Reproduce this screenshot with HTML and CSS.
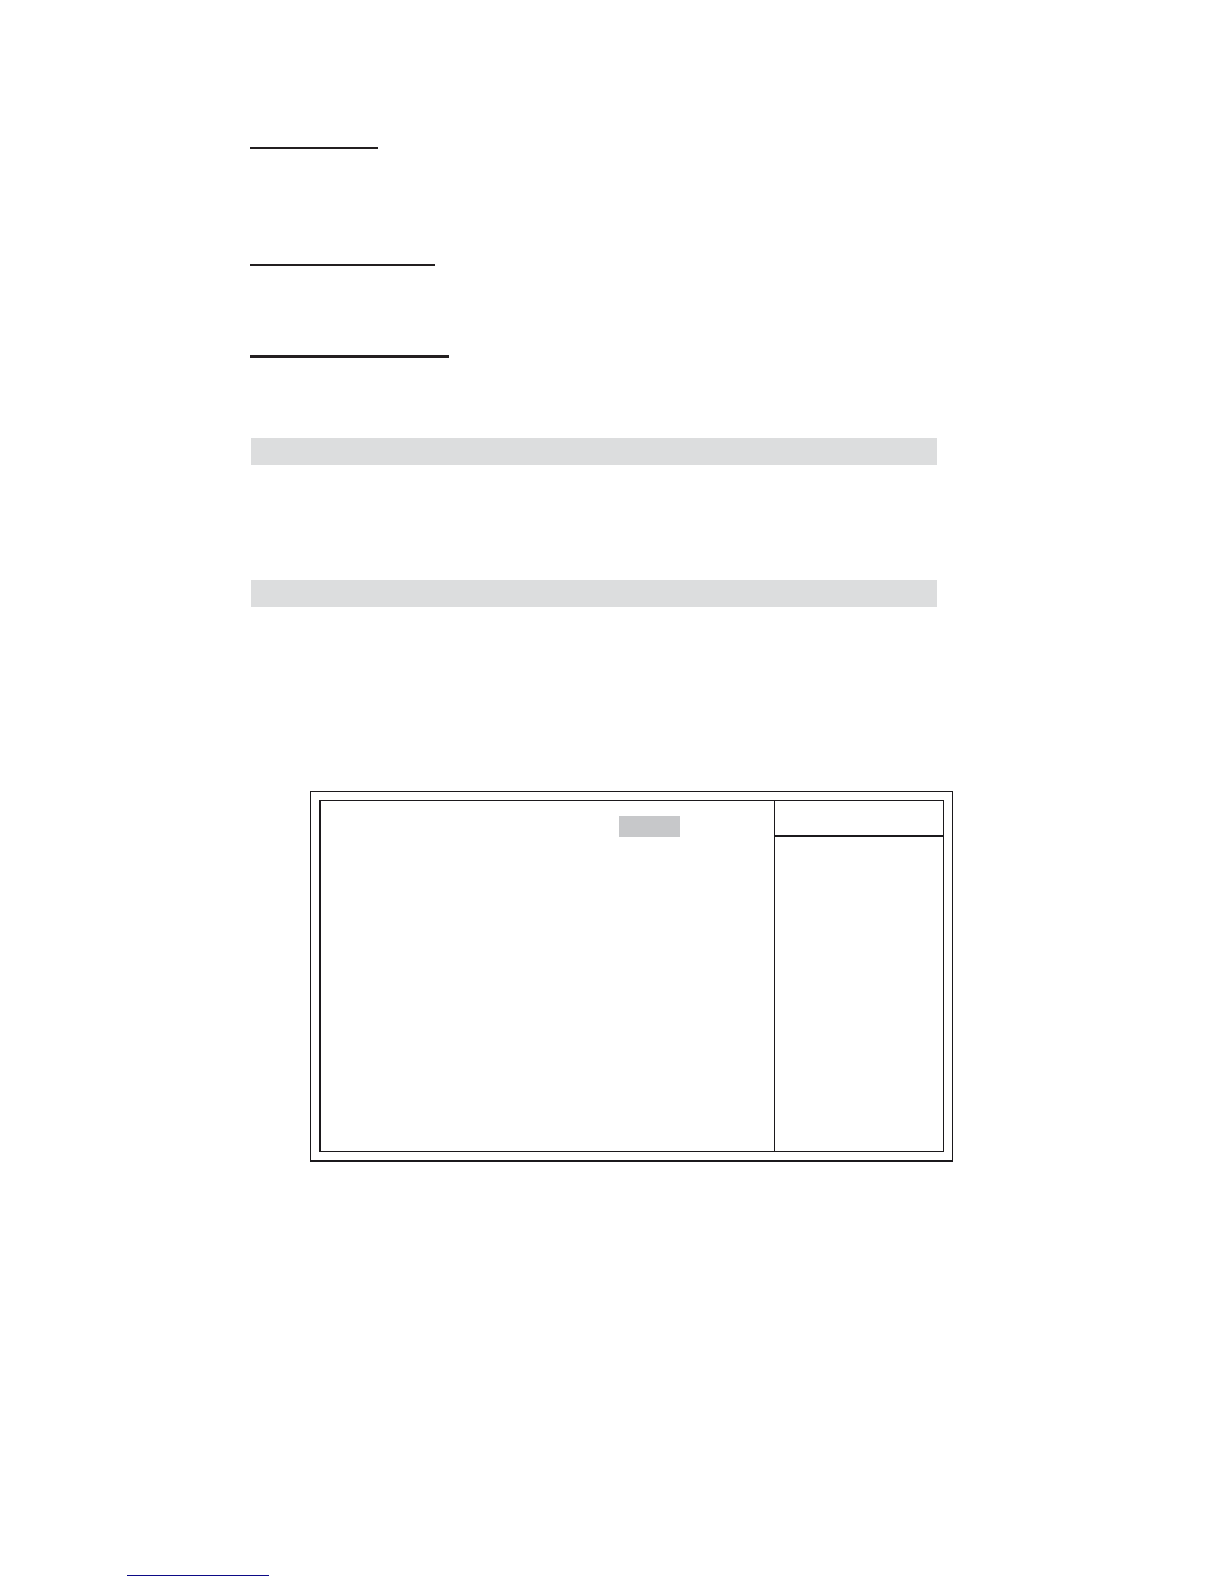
FILE: index.html
```html
<!DOCTYPE html>
<html lang="en">
<head>
<meta charset="utf-8">
<meta name="viewport" content="width=device-width, initial-scale=1">
<title>Document page</title>
<link rel="stylesheet" href="styles.css">
</head>
<body>
<main class="page">
  <hr class="rule rule-short">
  <hr class="rule rule-medium">
  <hr class="rule rule-heavy">
  <div class="band"></div>
  <div class="band"></div>
  <section class="frame">
    <div class="screen">
      <div class="settings"><div class="selected"></div></div>
      <aside class="help"><div class="help-head"></div></aside>
    </div>
  </section>
</main>
<footer class="footer"><hr class="footer-rule"></footer>
</body>
</html>
```
FILE: styles.css
```css
* { box-sizing: border-box; }

body {
  margin: 0;
  background: #ffffff;
  font-family: "Liberation Sans", sans-serif;
}

.page { padding: 147px 271px 0 250px; }

/* Heading underlines */
.rule {
  height: 2px;
  margin: 0;
  border: 0;
  background: #231f20;
}
.rule-short { width: 128px; margin-bottom: 115px; }
.rule-medium { width: 185px; margin-bottom: 89px; }
.rule-heavy { width: 199px; height: 3px; margin-bottom: 80px; }

/* Shaded section bands */
.band {
  height: 27px;
  margin: 0 16px 115px 1px;
  background: #dcddde;
}

/* Double-framed setup screen */
.frame {
  margin: 184px 0 0 60px;
  padding: 8px;
  border: 1px solid #1b191c;
  border-bottom-width: 2px;
}
.screen {
  display: grid;
  grid-template-columns: 1fr 169px;
  min-height: 352px;
  border: 1px solid #1b191c;
  border-left-width: 2px;
}
.settings { padding: 15px 94px 0 0; }
.selected {
  width: 61px;
  height: 21px;
  margin-left: auto;
  background: #c7c8ca;
}
.help { border-left: 1px solid #1b191c; }
.help-head {
  height: 36px;
  border-bottom: 2px solid #1b191c;
}

.footer { padding: 413px 0 8px 127px; }
.footer-rule {
  width: 142px;
  height: 1px;
  margin: 0;
  border: 0;
  background: #0c0a86;
}
```
